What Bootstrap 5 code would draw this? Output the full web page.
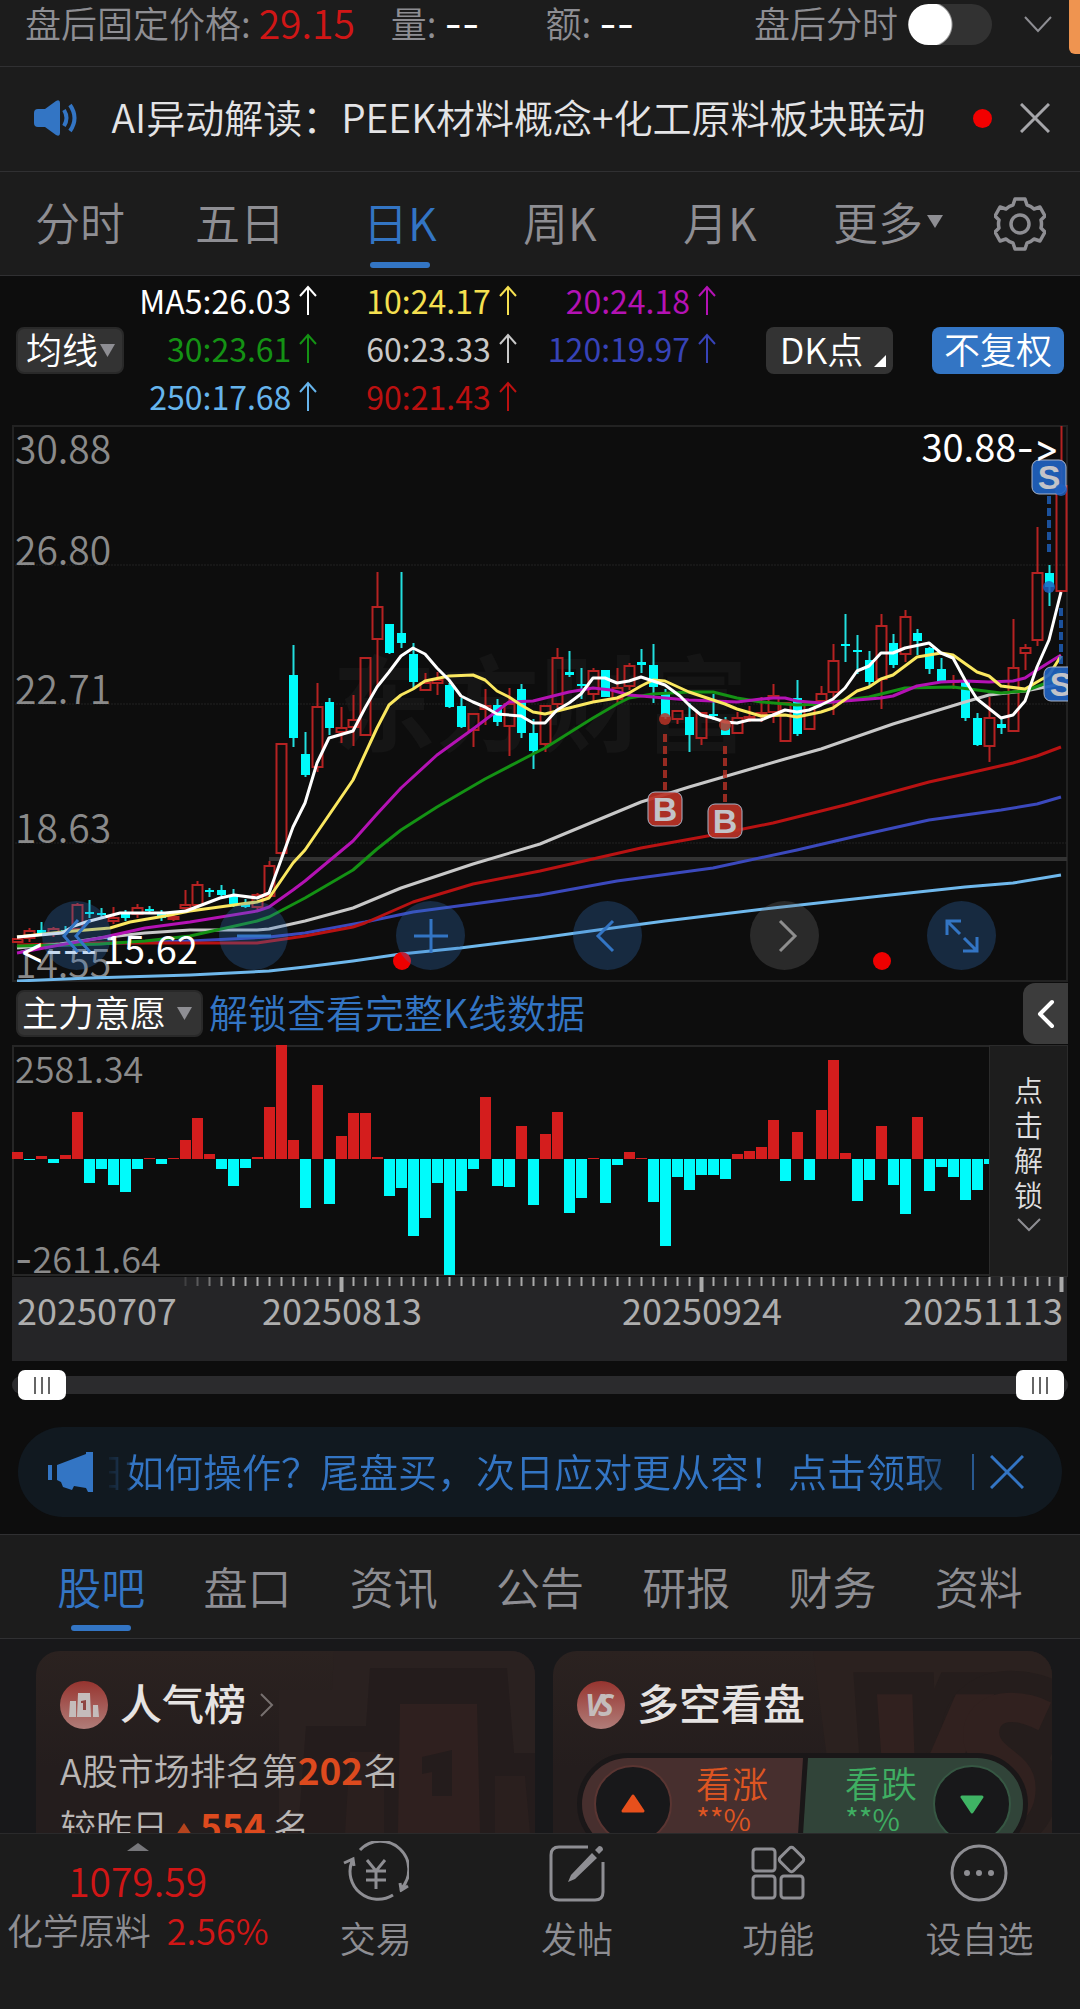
<!DOCTYPE html>
<html lang="zh-CN">
<head>
<meta charset="utf-8">
<meta name="viewport" content="width=device-width, initial-scale=1">
<title>日K</title>
<link href="https://cdn.jsdelivr.net/npm/bootstrap@5.3.0/dist/css/bootstrap.min.css" rel="stylesheet">
<style>
:root{--ink:#0d0d0d;--panel:#1c1c1c;--rule:#303032;--muted:#8e8e93;--blue:#3375c4;--red:#d01616}
body{background:var(--ink);color:#fff;font-family:"Noto Sans CJK SC",sans-serif;font-weight:350;font-size:36px;line-height:48px}
button,select,input{font:inherit;color:inherit}
button{background:none;border:0;padding:0}
a{text-decoration:none;color:inherit}
svg{display:block;flex:none}
svg text{font-family:"Noto Sans CJK SC",sans-serif}
.panel{background:var(--panel)}
.rule{border-bottom:1px solid var(--rule)}
.dim{color:var(--muted)}
.red{color:var(--red)}
.lift{padding-bottom:5px}
.fs-num{font-size:39px}
.dashes,svg text.dashes{font-family:Inter,sans-serif;font-size:38px;font-weight:400;font-variant-ligatures:none}
.after-row{height:67px;padding:0 28px 0 25px;line-height:45px}
.after-row .vol{margin-left:36px}
.after-row .amt{margin-left:66px}
.switch{appearance:none;width:84px;height:41px;margin:4px 0 0 10px;border:0;border-radius:21px;background:#323232 radial-gradient(circle at 22px 50%,#fff 21px,transparent 23px)}
.edge-tab{position:absolute;right:0;top:0;width:11px;height:54px;background:#ef9450;border-radius:0 0 0 6px}
.notice{height:105px;padding:0 30px 2px 34px;font-size:39px;color:#e4e4e6}
.dot{width:19px;height:19px;background:#f20000}
.period{height:104px;font-size:45px}
.period>*{flex:4 1 0;height:100%}
.period>.gear{flex:3 1 0;place-items:center}
.tab{position:relative;display:flex;align-items:center;justify-content:center;color:var(--muted);padding-bottom:4px}
.tab.on{color:var(--blue)}
.tab.on::after{content:"";position:absolute;bottom:7px;left:50%;margin-left:-30px;width:60px;height:6px;border-radius:3px;background:var(--blue)}
.caret{display:inline-block;border:8px solid transparent;border-top:13px solid var(--muted);border-bottom:0}
.legend{height:149px;padding:0 16px}
.ma{display:grid;grid-template-columns:repeat(3,1fr);column-gap:6px;font-size:32px;font-weight:400;margin-right:50px}
.ma span{display:flex;justify-content:flex-end;align-items:center;gap:8px}
.pick{appearance:none;border:2px solid #292929;border-radius:8px;height:47px;padding:0 0 5px 8px;line-height:38px;background:#333 url("data:image/svg+xml,%3Csvg xmlns='http://www.w3.org/2000/svg' width='15' height='13'%3E%3Cpath d='M0 0h15L7.500 13z' fill='%238e8e93'/%3E%3C/svg%3E") no-repeat right 7px center}
.pick option{color:#fff;background:#333}
.pick-ma{width:108px}
.pick-main{width:187px;padding-left:4px;background-position:right 9px center}
.chip{height:47px;border-radius:8px;line-height:40px;padding-bottom:5px}
.chip-dk{position:relative;width:127px;margin-right:39px;background:#333;padding-right:16px}
.chip-dk::after{content:"";position:absolute;right:7px;bottom:7px;border-left:12px solid transparent;border-bottom:12px solid #fff}
.chip-adj{width:132px;background:var(--blue)}
.plot{margin:0 12px}
.plot svg.wide{width:100%;height:auto}
.tools{position:absolute;left:30px;right:72px;bottom:12px}
.tool{width:69px;height:69px;border-radius:50%;background:rgba(49,117,196,.28);display:grid;place-items:center}
.tool.off{background:rgba(120,120,120,.28)}
.indicator{height:63px;margin-left:16px;margin-right:12px;gap:6px}
.indicator a{color:var(--blue);font-size:39px}
.drawer{width:45px;height:61px;background:#3c3c3c;border-radius:12px 0 0 12px;display:grid;place-items:center;margin-left:auto}
.volume svg.bars{flex:977 1 0;min-width:0}
.unlock{flex:77 1 0;background:#1d1d1d;border:1px solid #2b2b2b;color:#dededf;font-size:29px;line-height:35px;padding-top:26px}
.unlock svg{margin-top:6px}
.zoombar{position:relative;height:18px;margin:15px 12px 33px;border-radius:9px;background:#2b2b2d}
.zoombar input{appearance:none;position:absolute;left:6px;top:-6px;width:calc(100% - 10px);height:30px;background:none;pointer-events:none;margin:0}
.zoombar input::-webkit-slider-thumb{appearance:none;pointer-events:auto;width:48px;height:30px;border-radius:7px;border:0;background:linear-gradient(#666,#666) 16px 7px/2px 17px no-repeat,linear-gradient(#666,#666) 23px 7px/2px 17px no-repeat,linear-gradient(#666,#666) 30px 7px/2px 17px no-repeat,#fff}
.promo{height:90px;margin:0 18px 17px;padding:0 38px 0 30px;border-radius:45px;background:#111920;color:var(--blue);font-size:39px}
.ticker{flex:1 1 0;min-width:0;margin:0 28px 0 15px;-webkit-mask:linear-gradient(90deg,rgba(0,0,0,.1),rgba(0,0,0,.4) 20px,#000 22px,#000 calc(100% - 36px),rgba(0,0,0,.45));mask:linear-gradient(90deg,rgba(0,0,0,.1),rgba(0,0,0,.4) 20px,#000 22px,#000 calc(100% - 36px),rgba(0,0,0,.45))}
.bar-sep{width:2px;height:36px;background:#28588f;margin-right:16px}
.sections{height:105px;border-top:1px solid var(--rule);padding:0 28px;font-size:44px}
.sections>*{flex:1 1 0;height:100%;padding-bottom:2px}
.feed{flex:1 1 0;min-height:0;background:#18181a;padding:12px 28px 0 36px;gap:18px}
.tile{position:relative;flex:1 1 0;height:260px;border-radius:24px;background:linear-gradient(#2b2220,#241d1d 45%);padding:30px 24px;overflow:hidden;color:#b9b6b5}
.tile>*{position:relative}
.tile>.art{position:absolute;right:0;top:0}
.tile h2{font-size:42px;line-height:42px;font-weight:500;color:#e6e3e2;margin:0 14px 0 12px;padding-bottom:6px}
.tile p{margin:0;line-height:56px}
.tile .first{margin-top:12px}
.tile strong{color:#dd4a1e;font-weight:700;font-size:37px}
.rise{display:inline-block;width:24px;height:18px;background:#b5441e;clip-path:polygon(50% 0,100% 100%,0 100%);margin:0 4px}
.duel{height:102px;border:5px solid #1a1718;border-radius:51px;overflow:hidden;margin-top:24px;background:#1a1718}
.duel button{flex:1 1 0;line-height:38px}
.duel small{font-size:30px;line-height:34px;display:block}
.duel .side{padding-bottom:11px}
.up{background:#472f2e;color:#dd5522;clip-path:polygon(0 0,100% 0,calc(100% - 6px) 100%,0 100%);margin-right:-1px}
.down{background:#314439;color:#3fae62;clip-path:polygon(6px 0,100% 0,100% 100%,0 100%)}
.knob{width:78px;height:78px;border-radius:50%;background:#18181a;border:2px solid #5a3532;display:grid;place-items:center;flex:none}
.down .knob{border-color:#365743}
.dock{height:176px;border-top:1px solid #2a2a2b}
.quote{flex:275 1 0;padding-top:9px}
.quote .num{line-height:50px;margin-top:4px}
.dock .item{flex:201 1 0;color:var(--muted);padding-top:7px}
.item span{display:block;margin-top:8px}
</style>
<script src="https://cdn.jsdelivr.net/npm/bootstrap@5.3.0/dist/js/bootstrap.bundle.min.js"></script>
</head>
<body>
<div class="d-flex flex-column vh-100 overflow-hidden position-relative">

<header class="panel">
  <div class="after-row rule d-flex align-items-start dim text-nowrap">
    <span>盘后固定价格:</span><span class="red fs-num ms-2">29.15</span>
    <span class="vol">量: <span class="dashes text-white">--</span></span>
    <span class="amt">额: <span class="dashes text-white">--</span></span>
    <label class="ms-auto" for="afterSwitch">盘后分时</label>
    <input class="switch" id="afterSwitch" type="checkbox" role="switch">
    <button class="ms-4 mt-3 ps-2" aria-label="展开"><svg width="28" height="17" fill="none" stroke="#8e8e93" stroke-width="2"><path d="M1 1l13 14L27 1"/></svg></button>
  </div>
  <div class="notice rule d-flex align-items-center text-nowrap">
    <svg width="46" height="36" viewBox="0 0 46 36"><path d="M4 9h7L22 1q4-2 4 2v30q0 4-4 2L11 27H4q-4 0-4-4V13q0-4 4-4z" fill="#3375c4"/><path d="M30 10q5 8 0 16M36 5q9 13 0 26" fill="none" stroke="#3375c4" stroke-width="4"/></svg>
    <a href="#" class="lift ms-auto me-auto ps-2">AI异动解读：PEEK材料概念+化工原料板块联动</a>
    <span class="dot rounded-circle me-4 ms-4"></span>
    <button class="ms-1" aria-label="关闭"><svg width="30" height="30" stroke="#a6a6aa" stroke-width="3"><path d="M1 1l28 28M29 1L1 29"/></svg></button>
  </div>
  <nav class="period rule d-flex">
    <a href="#" class="tab">分时</a><a href="#" class="tab">五日</a><a href="#" class="tab on">日K</a><a href="#" class="tab">周K</a><a href="#" class="tab">月K</a>
    <button class="tab" aria-haspopup="true"><span class="ms-3">更多</span><i class="caret ms-1"></i></button>
    <button class="gear d-grid" aria-label="设置"><svg width="52" height="54" viewBox="-26 -27 52 54" fill="none" stroke="#8e8e93" stroke-width="3.500" stroke-linejoin="round"><path d="M-5-25H5L7-19Q11-18 14-15L20-17 25-8 21-4Q22 0 21 4L25 8 20 17 14 15Q11 18 7 19L5 25H-5L-7 19Q-11 18-14 15L-20 17-25 8-21 4Q-22 0-21-4L-25-8-20-17-14-15Q-11-18-7-19Z"/><circle r="9"/></svg></button>
  </nav>
</header>

<section class="legend d-flex align-items-center">
  <select class="pick pick-ma" aria-label="均线"><option>均线</option></select>
  <div class="ma lift flex-grow-1" id="ma"></div>
  <button class="chip chip-dk">DK点</button>
  <button class="chip chip-adj">不复权</button>
</section>

<section class="plot position-relative">
  <svg class="wide" id="kline" viewBox="12 425 1056 557" role="img" aria-label="日K线"></svg>
  <div class="tools d-flex justify-content-between">
    <button class="tool" aria-label="最早"><svg width="30" height="34" fill="none" stroke="#3375c4" stroke-width="3"><path d="M16 1L2 17l14 16M28 1L14 17l14 16"/></svg></button>
    <button class="tool" aria-label="缩小"><svg width="34" height="34" stroke="#3375c4" stroke-width="3"><path d="M0 17h34"/></svg></button>
    <button class="tool" aria-label="放大"><svg width="34" height="34" stroke="#3375c4" stroke-width="3"><path d="M0 17h34M17 0v34"/></svg></button>
    <button class="tool" aria-label="左移"><svg width="30" height="34" fill="none" stroke="#3375c4" stroke-width="3"><path d="M20 2L5 17l15 15"/></svg></button>
    <button class="tool off" aria-label="右移"><svg width="30" height="34" fill="none" stroke="#8e8e8e" stroke-width="3"><path d="M10 2l15 15-15 15"/></svg></button>
    <button class="tool" aria-label="全屏"><svg width="34" height="34" fill="none" stroke="#3375c4" stroke-width="3"><path d="M2 16V2h14M2 2l13 13M32 18v14H18M32 32L19 19"/></svg></button>
  </div>
</section>

<section class="indicator d-flex align-items-center text-nowrap">
  <select class="pick pick-main" aria-label="指标"><option>主力意愿</option></select>
  <a href="#" class="lift">解锁查看完整K线数据</a>
  <button class="drawer" aria-label="展开"><svg width="18" height="30" fill="none" stroke="#fff" stroke-width="4" stroke-linecap="round" stroke-linejoin="round"><path d="M15 3L3 15l12 12"/></svg></button>
</section>

<section class="plot volume d-flex">
  <svg class="bars" id="vol" viewBox="12 1045 977 232" role="img" aria-label="主力意愿"></svg>
  <button class="unlock d-flex flex-column align-items-center justify-content-start"><span>点</span><span>击</span><span>解</span><span>锁</span><svg width="24" height="14" fill="none" stroke="#8e8e93" stroke-width="2"><path d="M1 1l11 11L23 1"/></svg></button>
</section>
<section class="plot"><svg class="wide" id="axis" viewBox="12 1277 1056 84" role="img" aria-label="日期"></svg></section>

<div class="zoombar">
  <input type="range" value="0" aria-label="起点"><input type="range" value="100" aria-label="终点">
</div>

<div class="promo d-flex align-items-center text-nowrap">
  <svg width="46" height="40" viewBox="0 0 46 40" fill="#3375c4"><path d="M0 13h4v15H0zM9 13L38 2V0h7v40h-5l-2-4-12-2-2 4-9-3-2-5-4-2z"/></svg>
  <a href="#" class="ticker lift d-flex justify-content-end overflow-hidden">日如何操作？尾盘买，次日应对更从容！点击领取</a>
  <i class="bar-sep"></i>
  <button aria-label="关闭"><svg width="34" height="34" stroke="#3375c4" stroke-width="3"><path d="M1 1l32 32M33 1L1 33"/></svg></button>
</div>

<nav class="sections panel rule d-flex">
  <a href="#" class="tab on">股吧</a><a href="#" class="tab">盘口</a><a href="#" class="tab">资讯</a><a href="#" class="tab">公告</a><a href="#" class="tab">研报</a><a href="#" class="tab">财务</a><a href="#" class="tab">资料</a>
</nav>

<main class="feed d-flex overflow-hidden text-nowrap">
  <article class="tile">
    <svg class="art" width="256" height="182" viewBox="243 0 256 182" aria-hidden="true"><path d="M243 39h53L298 0h201v182H243z" fill="#2a2120"/><path d="M270 75h60l4-58h137l7 85h21v80H262z" fill="#241c1c"/><path d="M364 53h77l3 129h-82z" fill="#2f201f"/><path d="M314 101h34v81h-39zM459 125h30l5 57h-35z" fill="#2a1f1e"/><path d="M386 106l30-7v46h-20v-24l-10 2z" fill="#241c1c"/></svg>
    <div class="d-flex align-items-center">
      <svg width="48" height="48" viewBox="0 0 48 48"><defs><linearGradient id="g" x2="0" y2="1"><stop stop-color="#97342f"/><stop offset="1" stop-color="#b07d79"/></linearGradient></defs><circle cx="24" cy="24" r="24" fill="url(#g)"/><path d="M10 20h6v16H9zM18 12h12l1 24H17zM33 24h5l1 12h-6z" fill="#c4bcbb"/><path d="M21 20l5-1v10h-3v-7h-2z" fill="#8f4541"/></svg>
      <h2>人气榜</h2>
      <svg width="14" height="24" fill="none" stroke="#77706f" stroke-width="2"><path d="M1 1l11 11L1 23"/></svg>
    </div>
    <p class="first">A股市场排名第<strong>202</strong>名</p>
    <p>较昨日<i class="rise"></i><strong>554</strong> 名</p>
  </article>
  <article class="tile">
    <svg class="art" width="250" height="230" viewBox="249 0 250 230" aria-hidden="true"><path d="M260 0h239v230H290z" fill="#2b211f"/><g font-size="190" font-weight="800" font-style="italic"><text x="310 392" y="179" stroke="#251d1c" stroke-width="44" fill="#251d1c" style="font-family:'Open Sans',sans-serif">VS</text><text x="310 392" y="179" fill="#31211f" style="font-family:'Open Sans',sans-serif">VS</text></g></svg>
    <div class="d-flex align-items-center">
      <svg width="48" height="48" viewBox="0 0 48 48"><circle cx="24" cy="24" r="24" fill="url(#g)"/><text x="8 21" y="35" font-size="30" font-weight="700" font-style="italic" style="font-family:'Open Sans',sans-serif" fill="#c4bcbb">VS</text></svg>
      <h2>多空看盘</h2>
    </div>
    <div class="duel d-flex">
      <button class="up d-flex align-items-center ps-2 text-start"><span class="knob ms-1"><svg width="24" height="20"><path d="M12 2l10 15H2z" fill="#e8501c" stroke="#e8501c" stroke-width="3" stroke-linejoin="round"/></svg></span><span class="side ms-4">看涨<small>**%</small></span></button>
      <button class="down d-flex align-items-center justify-content-end pe-2 text-start"><span class="side me-3">看跌<small>**%</small></span><span class="knob me-1"><svg width="24" height="20"><path d="M12 18L2 3h20z" fill="#3fb364" stroke="#3fb364" stroke-width="3" stroke-linejoin="round"/></svg></span></button>
    </div>
  </article>
</main>

<footer class="dock panel d-flex text-nowrap">
  <a href="#" class="quote d-flex flex-column align-items-center red">
    <svg width="22" height="8"><path d="M11 0l11 8H0z" fill="#77777b"/></svg>
    <span class="num fs-num">1079.59</span>
    <span><span class="dim me-3">化学原料</span>2.56%</span>
  </a>
  <a href="#" class="item d-flex flex-column align-items-center"><svg width="66" height="64" viewBox="0 0 66 64" fill="none" stroke="#8e8e93" stroke-width="3"><path d="M17 9A28 28 0 0 1 58 48l-1-6M50 54A28 28 0 0 1 9 20M1 22l9-4 1 7M57 50l8-5M24 19l9 11 9-11M33 30v18M23 30h20M23 39h20"/></svg><span>交易</span></a>
  <a href="#" class="item d-flex flex-column align-items-center"><svg width="66" height="64" viewBox="0 0 66 64" fill="none" stroke="#8e8e93" stroke-width="3"><path d="M44 6H15q-8 0-8 8v37q0 8 8 8h36q8 0 8-8V21"/><path d="M24 41l3-7 21-22 5 5-22 21zM51 9l4-4q4 0 4 4l-4 4z" fill="#8e8e93" stroke="none"/></svg><span>发帖</span></a>
  <a href="#" class="item d-flex flex-column align-items-center"><svg width="66" height="64" viewBox="0 0 66 64" fill="none" stroke="#8e8e93" stroke-width="3"><rect x="8" y="8" width="22" height="22" rx="3"/><rect x="8" y="35" width="22" height="22" rx="3"/><rect x="36" y="35" width="22" height="22" rx="3"/><rect x="37" y="9" width="19" height="19" rx="3" transform="rotate(45 46.500 18.500)"/></svg><span>功能</span></a>
  <a href="#" class="item d-flex flex-column align-items-center"><svg width="66" height="64" viewBox="0 0 66 64"><circle cx="33" cy="32" r="27" fill="none" stroke="#8e8e93" stroke-width="3"/><g fill="#8e8e93"><circle cx="21" cy="32" r="3"/><circle cx="33" cy="32" r="3"/><circle cx="45" cy="32" r="3"/></g></svg><span>设自选</span></a>
</footer>
<i class="edge-tab"></i>
</div>

<script>
const X = i => 17.5 + 12 * i;
document.getElementById('ma').innerHTML = [['MA5:26.03','#fff'],['10:24.17','#f5e050'],['20:24.18','#b412b4'],['30:23.61','#149214'],['60:23.33','#c8c8c8'],['120:19.97','#3743b8'],['250:17.68','#66b4ec'],['90:21.43','#bb1010']]
  .map(([t,c]) => `<span style="color:${c}">${t}<svg width="18" height="30" fill="none" stroke="${c}" stroke-width="2"><path d="M9 30V2M1 11L9 2l8 9"/></svg></span>`).join('');

/* one candle per day: colour, high, body top, body bottom, low */
const days = `r938,938,943,943 r928,930,939,942 c922,930,934,936 r927,928,935,937 c926,930,933,935 r903,904,930,932 c900,912,914,918 c908,913,915,919 r907,917,922,924 c910,914,918,921 r904,907,915,918 c906,909,911,914 c910,913,918,921 r911,916,920,921 r890,904,909,913 r881,884,906,906 c888,890,892,897 c885,890,895,897 c889,896,904,907 c899,903,907,908 r893,894,908,910 r861,865,897,897 r743,743,854,857 c645,675,738,747 c732,754,775,777 r683,706,768,772 c698,702,728,735 r707,727,733,743 r695,719,728,746 r657,657,736,736 r572,606,640,687 c624,624,653,654 c572,633,643,648 c643,654,682,688 r673,682,691,691 r672,679,684,695 c683,685,707,708 c698,706,727,728 r713,713,731,747 r689,705,710,725 c699,705,722,726 r688,703,727,756 c684,689,733,738 c719,733,751,769 r705,705,745,752 r648,657,705,708 c651,672,675,677 c668,684,686,699 r668,670,695,703 c670,670,697,697 r668,687,700,703 r663,665,687,690 c649,662,665,673 c644,665,687,703 c689,693,717,719 r710,710,720,724 c703,717,735,752 r712,712,739,745 c694,714,716,720 c717,722,735,735 r712,717,734,734 r706,716,719,722 r697,712,716,722 r684,695,713,723 r702,702,742,742 c680,698,734,736 r701,701,730,730 r686,693,702,702 r644,660,693,715 c614,644,646,662 c635,650,652,674 c651,660,682,687 r614,625,680,709 c634,643,665,668 r610,616,655,662 c629,633,641,655 c647,648,669,674 c658,669,682,682 r675,680,683,689 c682,682,718,721 c713,718,745,746 r697,717,747,762 c718,724,728,734 r619,667,732,732 r644,647,654,670 r527,572,641,646 c565,573,587,606 r426,485,592,592`.split(' ');
const lines = {
 '#6fb8ec':'17,981 90,978 190,975 269,971 305,967 353,961 401,954 460,948 540,938 605,929 665,921 773,908 881,896 965,887 1013,883 1061,875',
 '#3b49bd':'17,947 120,943 190,941 269,937 305,933 365,922 413,912 473,904 540,895 617,881 713,868 797,850 857,836 929,820 1001,810 1037,804 1061,797',
 '#b81212':'17,945 100,943 257,943 305,936 353,927 365,923 413,902 473,884 540,871 641,848 713,835 773,823 845,805 929,782 965,774 1013,763 1037,756 1061,747',
 '#c8c8c8':'17,948 60,944 100,938 145,933 190,930 257,930 269,929 305,921 353,908 401,888 473,864 540,844 641,802 689,787 785,759 821,749 893,724 965,702 989,695 1025,691 1061,684',
 '#149214':'17,946 100,944 145,941 190,936 257,921 269,917 305,898 353,870 377,849 401,830 437,807 485,779 533,754 545,748 593,718 617,704 629,698 653,694 689,692 713,692 737,698 761,702 797,705 821,704 845,700 869,697 905,688 953,687 977,690 1001,693 1025,691 1049,682 1061,670',
 '#b412b4':'17,953 60,945 100,938 145,928 190,922 257,911 269,907 293,890 305,881 353,841 377,814 401,788 437,755 473,729 497,711 509,702 533,701 545,698 569,692 593,688 611,690 629,695 689,700 737,702 761,699 773,698 785,698 797,701 821,703 857,700 881,698 893,696 917,686 941,682 965,681 989,682 1013,681 1025,678 1037,670 1061,655',
 '#fbe860':'17,937 62,932 110,928 130,922 165,916 190,911 234,905 257,902 269,898 293,863 305,850 329,815 353,780 377,728 389,705 401,695 413,689 425,681 449,676 473,675 485,680 497,691 509,697 521,705 533,712 545,714 569,708 593,702 617,698 629,693 641,686 653,680 665,681 689,692 701,696 725,704 737,709 761,716 785,715 797,717 821,712 833,708 857,691 869,687 881,679 893,675 917,657 941,653 953,655 977,672 989,676 1001,686 1025,689 1049,675 1061,656',
 '#ffffff':'17,937 62,933 74,926 86,922 120,913 165,913 186,911 220,898 234,895 257,898 269,893 281,860 293,827 305,803 317,763 329,738 353,731 365,708 377,687 389,672 401,656 413,648 425,654 437,668 449,680 461,696 473,702 485,707 497,714 521,716 533,723 545,723 557,710 569,703 581,694 593,678 605,678 617,683 629,681 641,677 653,681 665,685 680,696 689,705 701,715 713,718 725,722 737,723 749,720 761,720 773,715 785,710 797,712 809,710 821,705 833,699 845,688 857,671 869,666 881,653 893,653 905,648 929,643 941,653 953,658 965,680 977,699 1001,718 1013,715 1025,701 1037,667 1049,640 1061,592'
};
let k = '<text x="332" y="744" font-size="104" font-weight="700" fill="#151515">东方财富</text><g stroke="#222" fill="none"><path d="M13 981V426H1067V981Z" stroke-width="2"/><path d="M12 565H1067M12 704H1067M12 843H1067" stroke-dasharray="2 1"/></g><path d="M269 859H1067" stroke="#333" stroke-width="4"/>';
k += '<g font-size="39" font-weight="350" fill="#8a8a8a">' + [['30.88',464],['26.80',565],['22.71',704],['18.63',843],['14.55',978]].map(([t,y]) => `<text x="15" y="${y}">${t}</text>`).join('') + '</g>';
days.forEach((d, i) => {
  const x = X(i), [h, t, b, l] = d.slice(1).split(',').map(Number);
  k += d[0] === 'r'
    ? `<path d="M${x} ${h}V${t}M${x} ${b}V${l}M${x-5} ${t+1}h10V${Math.max(b-1,t+2)}h-10z" fill="none" stroke="#b52222" stroke-width="2"/>`
    : `<path d="M${x} ${h}V${l}" stroke="#22dede" stroke-width="2"/><path d="M${x-4.5} ${t}h9V${b}h-9z" fill="#00fbfb"/>`;
});
for (const c in lines) k += `<polyline points="${lines[c]}" fill="none" stroke="${c}" stroke-width="3" stroke-linejoin="round"/>`;
const flag = (x, y, t, c, dx, y1, y2, dy, s) => `<path d="M${dx} ${y1}V${y2}" stroke="${c}" stroke-width="4" stroke-dasharray="8 4" opacity=".8"/><circle cx="${s}" cy="${dy}" r="6" fill="${c}" opacity=".85"/><rect x="${x}" y="${y}" width="34" height="34" rx="7" fill="${c}" fill-opacity=".92" stroke="#a9b4c8"/><text x="${x+17}" y="${y+29}" text-anchor="middle" font-size="34" font-weight="700" style="font-family:'Liberation Sans',sans-serif" fill="#c3c3c8">${t}</text>`;
k += flag(648,792,'B','#b93226',665,734,790,719,665) + flag(708,804,'B','#b93226',725,746,802,725,725) + flag(1032,460,'S','#1f62c0',1049,496,552,587,1049) + flag(1044,667,'S','#1f62c0',1061,608,664,490,1061);
k += '<g font-size="38" font-weight="400" fill="#fff"><text x="1059" y="462" text-anchor="end">30.88<tspan class="dashes">-&gt;</tspan></text><text class="dashes" x="20" y="964">&lt;---</text><text x="103" y="964">15.62</text></g><circle cx="402" cy="961" r="9" fill="#ee0000"/><circle cx="882" cy="961" r="9" fill="#ee0000"/>';
document.getElementById('kline').innerHTML = k;

const flow = [7,-1,3,-4,4,47,-24,-10,-26,-33,-10,1,-5,1,19,41,5,-10,-27,-9,2,52,114,19,-49,74,-45,23,46,46,2,-37,-29,-77,-59,-24,-116,-32,-10,62,-27,-28,33,-46,25,47,-54,-39,1,-44,-6,7,1,-43,-87,-18,-31,-16,-16,-20,5,8,12,39,-22,27,-21,49,99,6,-42,-21,33,-26,-55,42,-32,-8,-18,-41,-31,-5];
document.getElementById('vol').innerHTML = '<path d="M990 1046H13V1275H990" fill="none" stroke="#262626" stroke-width="2"/>'
  + flow.map((v, i) => `<rect x="${12+12*i}" y="${v>0?1159-v:1159}" width="11" height="${Math.abs(v)}" fill="${v>0?'#d41d1d':'#00fbfb'}"/>`).join('')
  + '<g font-size="36" font-weight="350" fill="#8a8a8a"><text x="15" y="1083">2581.34</text><text x="15" y="1273"><tspan class="dashes">-</tspan>2611.64</text></g>';

let a = '<path d="M12 1277H1067V1361H12Z" fill="#252527"/>';
for (let i = 14; i < 88; i++) {
  const big = i === 27 || i === 57 || i === 87;
  a += `<path d="M${X(i)} 1277v${big?15:9}" stroke="#aaa" stroke-width="${big?4:2}" opacity="${Math.min(1,(i-13)/5)}"/>`;
}
a += '<g font-size="36" font-weight="400" fill="#aeaeae"><text x="17" y="1325">20250707</text><text x="342" y="1325" text-anchor="middle">20250813</text><text x="702" y="1325" text-anchor="middle">20250924</text><text x="1063" y="1325" text-anchor="end">20251113</text></g>';
document.getElementById('axis').innerHTML = a;
</script>
</body>
</html>
